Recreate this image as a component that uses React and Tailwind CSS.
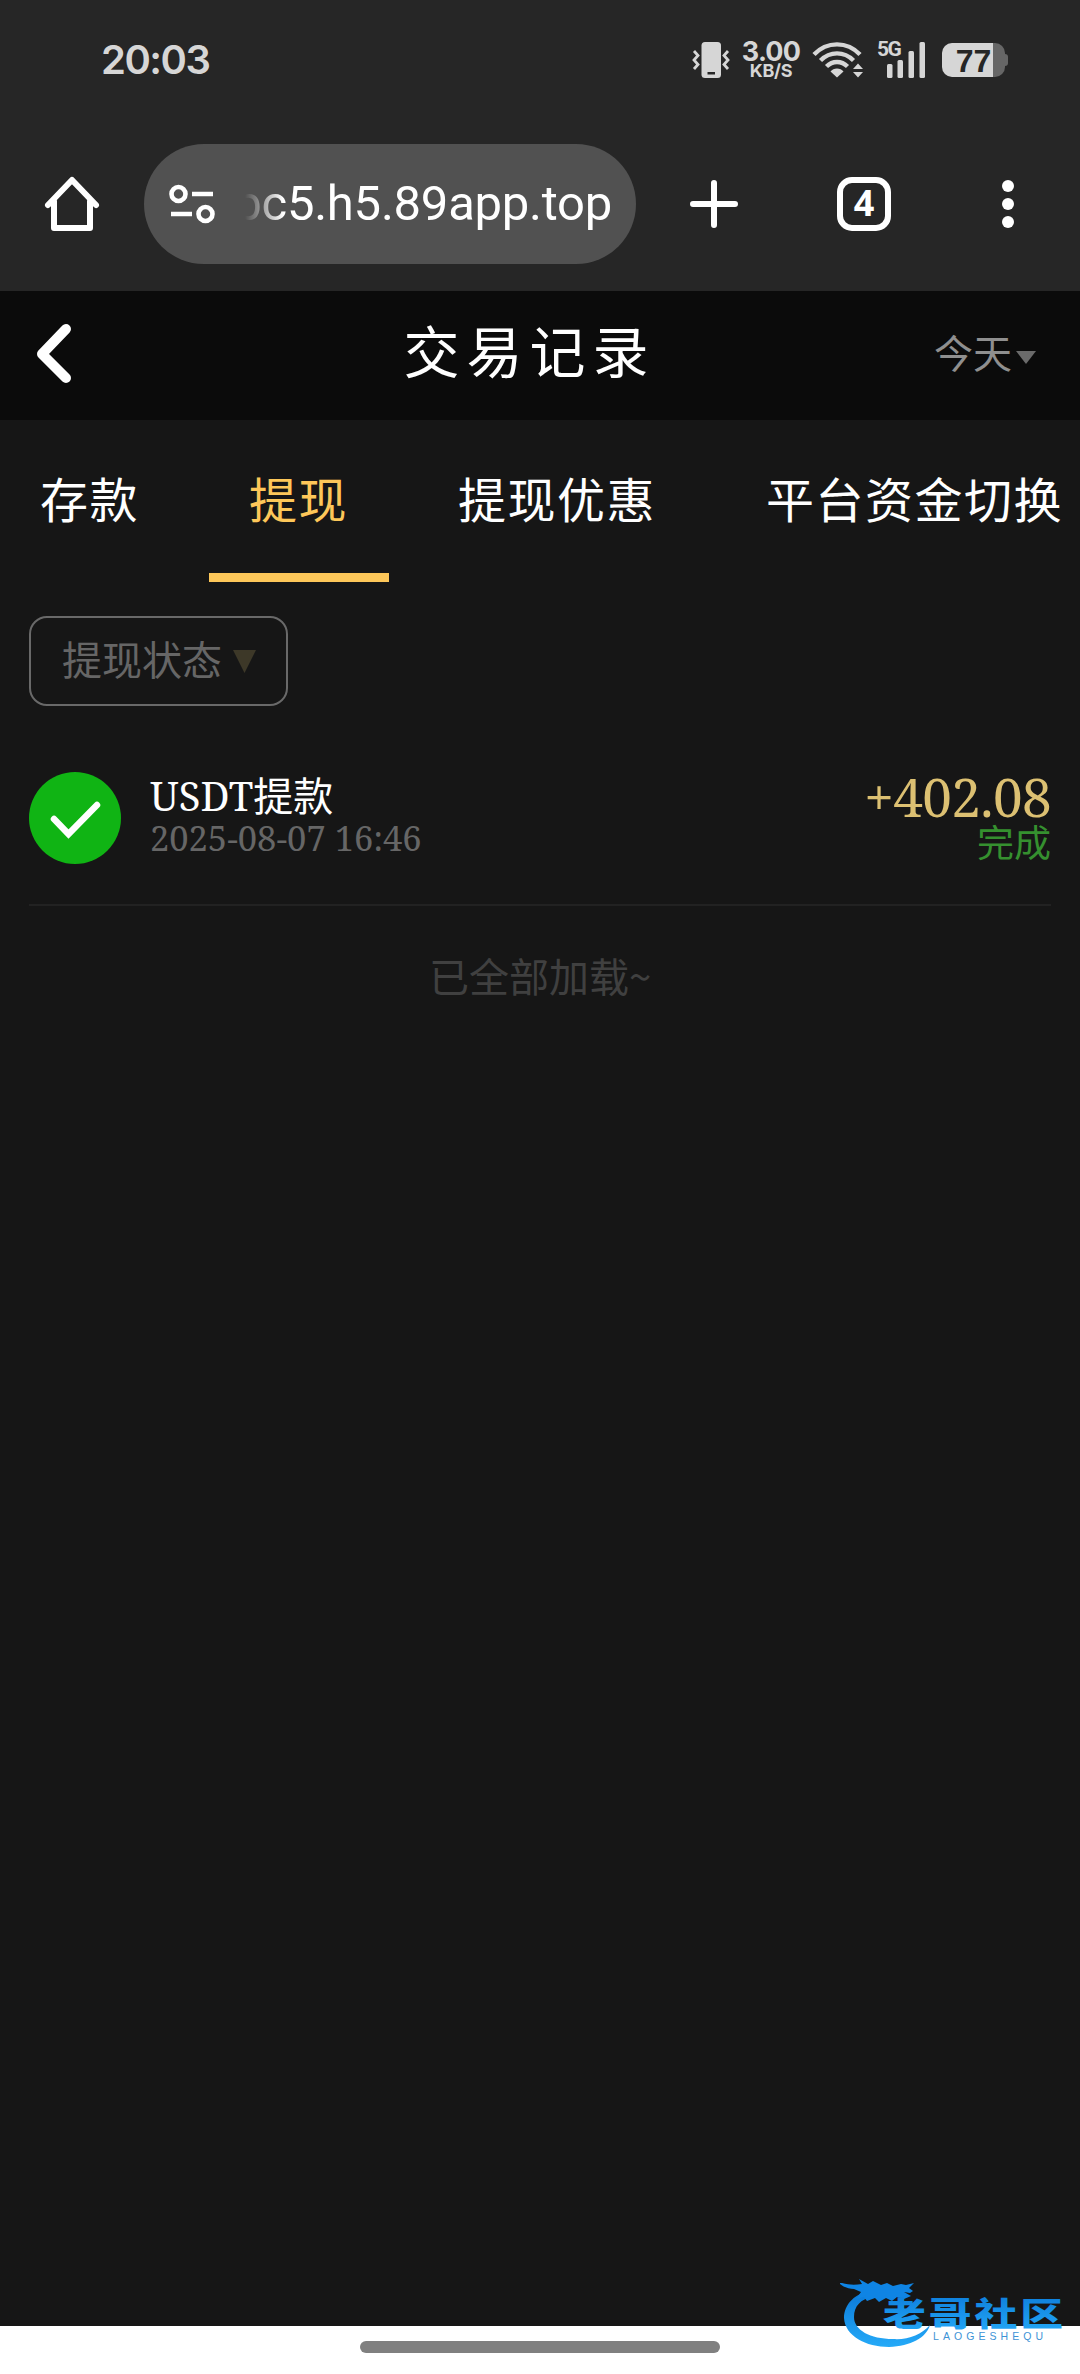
import React from "react";

const tabs = [
  { label: "存款" },
  { label: "提现", active: true },
  { label: "提现优惠" },
  { label: "平台资金切换" },
];

function StatusBar() {
  return (
    <div className="flex h-[120px] items-center justify-between pl-[101px] pr-[72px] text-[#d6d6d6]">
      <div className="font-['Inter',sans-serif] text-[40px] font-semibold leading-none tracking-[-1.5px]">20:03</div>
      <div className="flex h-9 items-center">
        <svg className="h-9 w-[38px]" viewBox="0 0 38 36" fill="none">
          <rect x="9.500" y="0" width="19.500" height="36" rx="3.500" fill="#d6d6d6" />
          <rect x="15.500" y="30" width="7.500" height="2.500" fill="#262626" />
          <path d="M2 9l4 4.500-4 4.500 4 4.500-4 4.500M36 9l-4 4.500 4 4.500-4 4.500 4 4.500" stroke="#d6d6d6" strokeWidth="2.800" />
        </svg>
        <div className="ml-[11px] mr-px flex w-[60px] flex-col items-center font-['Inter',sans-serif] font-bold">
          <span className="text-[27px] leading-[20px] tracking-[-0.8px]">3.00</span>
          <span className="text-[18px] leading-[17px] tracking-[-0.3px]">KB/S</span>
        </div>
        <svg className="ml-[10px] h-9 w-[52px]" viewBox="0 0 52 36" fill="none" stroke="#d6d6d6" strokeWidth="4.400">
          <path d="M2 12.500C15-1 35-1 48 12.500M8.500 18.500C18 9 32 9 41.500 18.500M14.500 24.500C20.500 18.500 29.500 18.500 35.500 24.500" />
          <path d="M25 35.500l-6.500-6c3-4 10-4 13 0z" fill="#d6d6d6" stroke="none" />
          <path d="M41 27l5-5.500 5 5.500zM41 30l5 5.500 5-5.500z" fill="#d6d6d6" stroke="none" />
        </svg>
        <div className="relative ml-[13px] h-9 w-[50px]">
          <span className="absolute left-0 top-0 font-['Roboto',sans-serif] text-[21px] font-bold leading-[15px] tracking-[-1.5px]">5G</span>
          <svg className="h-9 w-[50px]" viewBox="0 0 50 36" fill="#d6d6d6">
            <rect x="10" y="22" width="5.500" height="14" rx="1.500" />
            <rect x="20.500" y="18" width="5.500" height="18" rx="1.500" />
            <rect x="31.500" y="9" width="5.500" height="27" rx="1.500" />
            <rect x="42.500" y="0" width="5.500" height="36" rx="1.500" />
          </svg>
        </div>
        <div className="ml-[15px] flex items-center">
          <div className="flex h-[34px] w-[63px] items-center justify-center rounded-[10px] bg-[linear-gradient(90deg,#d6d6d6_81%,#666_81%)] pt-0.5 font-['Liberation_Sans',sans-serif] text-[32px] font-bold leading-none text-[#262626]">
            77
          </div>
          <div className="h-3 w-[3px] rounded-r-sm bg-[#666]" />
        </div>
      </div>
    </div>
  );
}

function BrowserBar() {
  return (
    <div className="flex h-[171px] items-center pb-[3px] text-white">
      <svg className="ml-[42px] h-[60px] w-[60px] shrink-0" viewBox="0 0 60 60" fill="none" stroke="#fff" strokeWidth="6" strokeLinecap="round" strokeLinejoin="round">
        <path d="M6 31L30 6l24 25M12 27v27h36V27" />
      </svg>
      <div className="ml-[42px] flex h-[120px] w-[492px] items-center rounded-full bg-[#515151]">
        <svg className="ml-[25px] h-10 w-[46px] shrink-0" viewBox="0 0 46 40" fill="none" stroke="#fff" strokeWidth="4.600">
          <circle cx="9.500" cy="10" r="7" />
          <circle cx="36.500" cy="30" r="7" />
          <path d="M23 10h21M2 30h21" />
        </svg>
        <div className="ml-[30px] flex w-[367px] justify-end overflow-hidden whitespace-nowrap font-['Roboto',sans-serif] text-[49px] leading-[70px] tracking-[-0.25px] [mask-image:linear-gradient(90deg,transparent,#000_38px)]">
          bc5.h5.89app.top
        </div>
      </div>
      <svg className="ml-[54px] h-12 w-12 shrink-0" viewBox="0 0 48 48" stroke="#fff" strokeWidth="6" strokeLinecap="round">
        <path d="M24 3v42M3 24h42" />
      </svg>
      <div className="ml-[99px] flex h-[54px] w-[54px] items-center justify-center rounded-[15px] border-[6px] border-white pb-0.5 font-['Noto_Sans',sans-serif] text-[36px] font-bold leading-none">
        4
      </div>
      <svg className="ml-[111px] h-12 w-3 shrink-0" viewBox="0 0 12 48" fill="#fff">
        <circle cx="6" cy="6" r="6" />
        <circle cx="6" cy="24" r="6" />
        <circle cx="6" cy="42" r="6" />
      </svg>
    </div>
  );
}

function PageHeader() {
  return (
    <div className="grid h-[129px] grid-cols-[1fr_auto_1fr] items-center bg-[#0b0b0b] pb-[5px]">
      <svg className="ml-9 h-[60px] w-9" viewBox="0 0 36 60" fill="none" stroke="#fff" strokeWidth="10" strokeLinecap="round" strokeLinejoin="round">
        <path d="M30 6L6 31l24 24" />
      </svg>
      <h1 className="pr-[21px] pb-[9px] text-[56px] leading-none tracking-[7px] text-white">交易记录</h1>
      <div className="flex items-center justify-end pb-[3px] pr-11 text-[39px] text-[#8f8f8f]">
        今天
        <span className="ml-1 mt-3 h-[13px] w-5 bg-[#6b6b6b] [clip-path:polygon(0_0,100%_0,50%_100%)]" />
      </div>
    </div>
  );
}

function Tabs() {
  return (
    <div className="flex h-[162px] gap-[29px] overflow-hidden">
      {tabs.map((tab) => (
        <div
          key={tab.label}
          className={`h-full shrink-0 border-b-[9px] pl-10 pr-[41px] text-[48px] leading-[154px] tracking-[1.5px] ${
            tab.active ? "border-[#fdc759] text-[#fdc759]" : "border-transparent text-white"
          }`}
        >
          {tab.label}
        </div>
      ))}
    </div>
  );
}

function RecordRow() {
  return (
    <div className="mx-[29px] mt-[38px] flex h-[162px] items-start border-b-2 border-[#222]">
      <svg className="mt-[28px] h-[92px] w-[92px] shrink-0" viewBox="0 0 92 92" fill="none">
        <circle cx="46" cy="46" r="46" fill="#10b414" />
        <path d="M25 47l14.500 15L68 33" stroke="#fff" strokeWidth="6.500" strokeLinecap="round" />
      </svg>
      <div className="ml-[29px] mt-[28px] font-['Noto_Serif','DejaVu_Serif',serif]">
        <div className="text-[40px] leading-[45px] text-white">
          USDT<span className="font-['Noto_Sans_CJK_SC',sans-serif]">提款</span>
        </div>
        <div className="text-[34.5px] leading-[40px] text-[#666]">2025-08-07 16:46</div>
      </div>
      <div className="ml-auto mt-[28px] text-right">
        <div className="font-['Noto_Serif','DejaVu_Serif',serif] text-[53px] leading-[50px] tracking-[-0.6px] text-[#dcc072]">+402.08</div>
        <div className="text-[37px] leading-[38px] text-[#35902f]">完成</div>
      </div>
    </div>
  );
}

function Watermark() {
  return (
    <svg className="absolute bottom-[22px] right-[10px] h-[76px] w-[230px]" viewBox="840 2276 230 76">
      <defs>
        <linearGradient id="wm" x1="0" y1="0" x2="0" y2="1">
          <stop offset="0" stopColor="#0a78d8" />
          <stop offset="1" stopColor="#25aaf8" />
        </linearGradient>
      </defs>
      <path
        fill="url(#wm)"
        d="M873 2290C855 2293 844 2304 844 2318c1 18 22 29 45 29 22-1 37-9 41-22-9 10-22 15-37 14-23 0-39-9-39-22 0-11 7-18 18-20l9-3z"
      />
      <path
        fill="#0f84e4"
        d="M842 2283c7 2 13 2 20 1l-3-5 9 5 5-3 8 4 6-2 6 3 8-2 5 1 8-2-5 5 4 3-3 2-6-1 7 4-7 3-7-2-5 4-6-3-7 4-4-4-8 3-3-4-8 2 5-7-7-3c-5 0-11-2-15-6z"
      />
      <g transform="translate(883 2326) scale(1.205 0.920)">
        <text fill="url(#wm)" fontFamily="Noto Sans CJK SC, sans-serif" fontWeight="900" fontSize="35.500" letterSpacing="2.500">老哥社区</text>
      </g>
      <text x="933" y="2340" fill="#3d93d6" fontFamily="Liberation Sans, sans-serif" fontSize="10.500" textLength="110">LAOGESHEQU</text>
    </svg>
  );
}

export default function App() {
  return (
    <div className="relative flex h-[2374px] w-[1080px] flex-col bg-[#161616] font-['Noto_Sans_CJK_SC',sans-serif]">
      <div className="bg-[#262626]">
        <StatusBar />
        <BrowserBar />
      </div>
      <PageHeader />
      <Tabs />
      <div className="ml-[29px] mt-[34px] flex h-[90px] w-[259px] shrink-0 items-center rounded-[18px] border-2 border-[#696969] pb-[6px] pl-[31px] text-[40px] text-[#666]">
        提现状态
        <span className="ml-[11px] mt-[7px] h-[23px] w-[23px] bg-[#3d3828] [clip-path:polygon(0_0,100%_0,50%_100%)]" />
      </div>
      <RecordRow />
      <div className="mt-[39px] text-center text-[40px] text-[#404040]">已全部加载~</div>
      <div className="mt-auto flex h-12 justify-center bg-white pt-[15px]">
        <div className="h-3 w-[360px] rounded-full bg-[#808080]" />
      </div>
      <Watermark />
    </div>
  );
}
